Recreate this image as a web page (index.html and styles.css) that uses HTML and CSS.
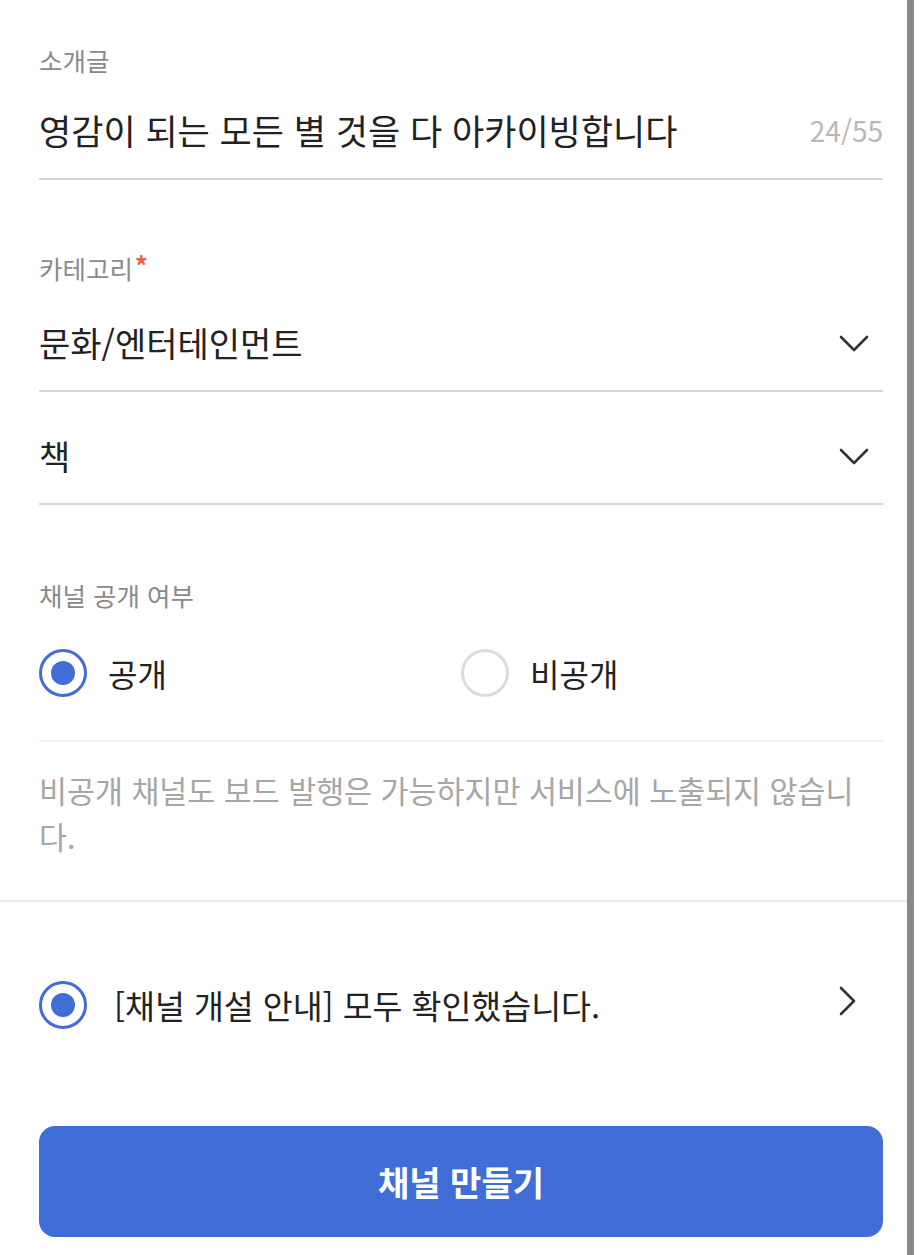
FILE: index.html
```html
<!DOCTYPE html>
<html lang="ko">
<head>
  <meta charset="utf-8">
  <title>채널 만들기</title>
  <link rel="stylesheet" href="styles.css">
</head>
<body>
  <div class="page">
    <div class="inner">
      <div class="field-label">소개글</div>
      <div class="text-row">
        <span class="text-value">영감이 되는 모든 별 것을 다 아카이빙합니다</span>
        <span class="counter">24/55</span>
      </div>

      <div class="field-label category-label">카테고리<span class="required">*</span></div>
      <div class="select-row">
        <span class="select-value">문화/엔터테인먼트</span>
        <svg class="chevron-down" width="30" height="18" viewBox="0 0 30 18"><path d="M2 2 L15 15 L28 2" fill="none" stroke="#333" stroke-width="2.6" stroke-linecap="round" stroke-linejoin="round"/></svg>
      </div>
      <div class="select-row">
        <span class="select-value">책</span>
        <svg class="chevron-down" width="30" height="18" viewBox="0 0 30 18"><path d="M2 2 L15 15 L28 2" fill="none" stroke="#333" stroke-width="2.6" stroke-linecap="round" stroke-linejoin="round"/></svg>
      </div>

      <div class="field-label open-label">채널 공개 여부</div>
      <div class="radio-group">
        <label class="radio-item">
          <span class="radio checked"></span>
          <span class="radio-text">공개</span>
        </label>
        <label class="radio-item">
          <span class="radio"></span>
          <span class="radio-text">비공개</span>
        </label>
      </div>
      <p class="helper">비공개 채널도 보드 발행은 가능하지만 서비스에 노출되지 않습니다.</p>
    </div>

    <div class="inner agree-section">
      <div class="agree-row">
        <span class="radio checked"></span>
        <span class="agree-text">[채널 개설 안내] 모두 확인했습니다.</span>
        <svg class="chevron-right" width="20" height="30" viewBox="0 0 20 30"><path d="M3 2 L16 15 L3 28" fill="none" stroke="#333" stroke-width="2.6" stroke-linecap="round" stroke-linejoin="round"/></svg>
      </div>
      <button class="submit-button" type="button">채널 만들기</button>
    </div>
  </div>
</body>
</html>
```

FILE: styles.css
```css
* {
  margin: 0;
  padding: 0;
  box-sizing: border-box;
}

body {
  font-family: "Noto Sans CJK KR", "Noto Sans", sans-serif;
  background-color: #fff;
  color: #222;
  overflow: hidden;
}

.page {
  width: 914px;
  min-height: 1255px;
  border-right: 7px solid #8a8a8a;
}

.inner {
  padding: 44px 24px 41px 39px;
  border-bottom: 2px solid #ececec;
}

.field-label {
  font-size: 25.5px;
  line-height: 32px;
  color: #8a8a8a;
}

.required {
  color: #e8643f;
  font-size: 26px;
  font-weight: bold;
  line-height: 26px;
  vertical-align: top;
  margin-left: 2px;
}

.text-row {
  display: flex;
  align-items: center;
  justify-content: space-between;
  padding: 32px 0 26px;
  border-bottom: 2px solid #d6d6d6;
}

.text-value {
  font-size: 35px;
  line-height: 44px;
}

.counter {
  font-size: 28px;
  line-height: 44px;
  color: #b8b8b8;
}

.category-label {
  margin-top: 72px;
}

.select-row {
  display: flex;
  align-items: center;
  justify-content: space-between;
  padding: 37px 0 25px;
  border-bottom: 2px solid #d6d6d6;
}

.select-row + .select-row {
  padding-top: 42px;
}

.select-value {
  font-size: 34px;
  line-height: 44px;
}

.chevron-down {
  margin-right: 14px;
  margin-top: 2px;
}

.open-label {
  margin-top: 74px;
}

.radio-group {
  display: grid;
  grid-template-columns: 1fr 1fr;
  margin-top: 38px;
  padding-bottom: 43px;
  border-bottom: 2px solid #f1f1f1;
}

.radio-item {
  display: flex;
  align-items: center;
  gap: 21px;
}

.radio {
  flex: none;
  width: 48px;
  height: 48px;
  border-radius: 50%;
  border: 3px solid #dcdcdc;
  display: flex;
  align-items: center;
  justify-content: center;
}

.radio.checked {
  border-color: #416ed6;
}

.radio.checked::after {
  content: "";
  width: 24px;
  height: 24px;
  border-radius: 50%;
  background-color: #416ed6;
}

.radio-text {
  font-size: 32px;
  line-height: 44px;
}

.helper {
  margin-top: 25px;
  font-size: 30.4px;
  line-height: 46px;
  color: #a6a6a6;
}

.agree-section {
  padding-top: 79px;
  border-bottom: none;
}

.agree-row {
  display: flex;
  align-items: center;
}

.agree-text {
  flex: 1;
  margin-left: 27px;
  font-size: 32.5px;
  line-height: 48px;
}

.chevron-right {
  margin-right: 25px;
  margin-top: -8px;
}

.submit-button {
  display: block;
  width: 100%;
  height: 111px;
  margin-top: 97px;
  border: none;
  border-radius: 16px;
  background-color: #416ed6;
  color: #fff;
  font-family: "Noto Sans CJK KR", "Noto Sans", sans-serif;
  font-size: 34px;
  font-weight: bold;
}
```
